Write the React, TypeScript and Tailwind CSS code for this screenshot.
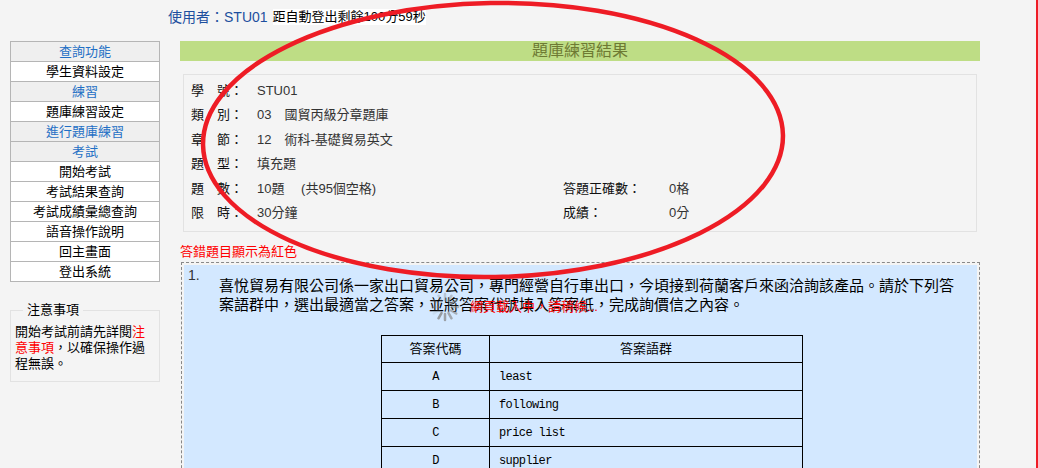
const FONT = "font-['Liberation_Sans','Noto_Sans_CJK_TC',sans-serif]";

const menu = [
  { label: "查詢功能", head: true },
  { label: "學生資料設定" },
  { label: "練習", head: true },
  { label: "題庫練習設定" },
  { label: "進行題庫練習", head: true },
  { label: "考試", head: true },
  { label: "開始考試" },
  { label: "考試結果查詢" },
  { label: "考試成績彙總查詢" },
  { label: "語音操作說明" },
  { label: "回主畫面" },
  { label: "登出系統" },
];

const infoRows = [
  { label: "學　號：", value: "STU01" },
  { label: "類　別：", value: "03　國貿丙級分章題庫" },
  { label: "章　節：", value: "12　術科-基礎貿易英文" },
  { label: "題　型：", value: "填充題" },
  { label: "題　數：", value: "10題　 (共95個空格)", extra: { label: "答題正確數：", value: "0格" } },
  { label: "限　時：", value: "30分鐘", extra: { label: "成績：", value: "0分" } },
];

const answers = [
  { code: "A", word: "least" },
  { code: "B", word: "following" },
  { code: "C", word: "price list" },
  { code: "D", word: "supplier" },
];

function Spinner() {
  // 12 spokes, darkest at the leading edge
  const spokes = Array.from({ length: 12 }, (_, i) => i);
  return (
    <svg width="32" height="32" viewBox="-16 -16 32 32">
      {spokes.map((i) => (
        <line
          key={i}
          x1="0"
          y1="-7"
          x2="0"
          y2="-13"
          stroke="#8a8a8a"
          strokeWidth="2.5"
          strokeLinecap="round"
          opacity={0.12 + ((i + 4) % 12) / 16}
          transform={`rotate(${i * 30})`}
        />
      ))}
    </svg>
  );
}

export default function App() {
  return (
    <div className={`relative h-[468px] w-full overflow-hidden bg-[#f4f4f4] text-[13px] text-[#222] ${FONT}`}>
      <header className="flex h-[41px] items-start pl-[168px] pt-[9px] leading-[16px]">
        <span className="text-[14px] text-[#1d4f9e]">使用者：STU01</span>
        <span className="ml-[5px] bg-white text-black">距自動登出剩餘100分59秒</span>
      </header>

      <div className="flex">
        <aside className="ml-[10px] w-[150px] shrink-0">
          <nav className="border-x border-t border-[#b5b5b5]">
            {menu.map((item) => (
              <div
                key={item.label}
                className={`flex h-[20px] items-center justify-center border-b border-[#b5b5b5] ${
                  item.head ? "bg-[#efefef] text-[#1f6fc5]" : "bg-white text-black"
                }`}
              >
                {item.label}
              </div>
            ))}
          </nav>

          <fieldset className="mt-[20px] h-[80px] border border-[#e2e2e2] px-[4px] pb-[4px]">
            <legend className="ml-[8px] px-[4px] leading-[16px] text-black">注意事項</legend>
            <p className="mt-[6px] leading-[16px] text-black">
              開始考試前請先詳閱<span className="text-[#ff0000]">注意事項</span>，以確保操作過程無誤。
            </p>
          </fieldset>
        </aside>

        <main className="ml-[20px] w-[800px]">
          <div className="flex h-[20px] items-center justify-center bg-[#bedd85] text-[16px] text-[#6e7a33]">
            題庫練習結果
          </div>

          <section className="mx-[3px] mt-[13px] border border-[#e2e2e2] px-[7px] pb-[6px] pt-[3px]">
            {infoRows.map((row) => (
              <div key={row.label} className="flex h-[24.5px] items-center">
                <span className="w-[66px] shrink-0 text-[#111]">{row.label}</span>
                <span className="w-[306px] shrink-0 whitespace-pre text-[#333]">{row.value}</span>
                {row.extra && (
                  <>
                    <span className="w-[106px] shrink-0 text-[#111]">{row.extra.label}</span>
                    <span className="text-[#333]">{row.extra.value}</span>
                  </>
                )}
              </div>
            ))}
          </section>

          <p className="mt-[11px] leading-[18px] text-[#ff0000]">答錯題目顯示為紅色</p>

          <div className="ml-[1px] mt-[1px] w-[799px] border border-dashed border-[#888] p-[2px]">
            <div className="flex h-[220px] bg-[#d3e8ff]">
              <div className="w-[35px] shrink-0 pl-[4px] pt-[2px] text-[14px] leading-[16px] text-[#333]">1.</div>
              <div className="w-[746px] pt-[11px]">
                <p className="text-[15px] leading-[19px] text-black">
                  喜悅貿易有限公司係一家出口貿易公司，專門經營自行車出口，今頃接到荷蘭客戶來函洽詢該產品。請於下列答案語群中，選出最適當之答案，並將答案代號填入答案紙，完成詢價信之內容。
                </p>
                <table className="mx-auto mt-[21px] w-[422px] border-collapse text-black">
                  <thead>
                    <tr>
                      <th className="h-[27px] w-[108px] border border-black font-normal">答案代碼</th>
                      <th className="h-[27px] border border-black font-normal">答案語群</th>
                    </tr>
                  </thead>
                  <tbody className="font-['Liberation_Mono',monospace] text-[12px] tracking-[-0.6px]">
                    {answers.map((a) => (
                      <tr key={a.code}>
                        <td className="h-[28px] border border-black text-center">{a.code}</td>
                        <td className="h-[28px] border border-black pl-[9px]">{a.word}</td>
                      </tr>
                    ))}
                  </tbody>
                </table>
              </div>
            </div>
          </div>
        </main>
      </div>

      {/* page-loading indicator */}
      <div className="absolute left-[429px] top-[291px] flex items-center">
        <Spinner />
        <span className="ml-[9px] text-[13px] text-[#ff0000]">網頁載入中，請稍候...</span>
      </div>

      {/* hand-drawn red markup */}
      <svg className="pointer-events-none absolute left-0 top-0" width="1038" height="468">
        <ellipse cx="493" cy="140" rx="290" ry="137" fill="none" stroke="#ee1c25" strokeWidth="4.5" transform="rotate(-1 493 140)" />
        <line x1="1037" y1="0" x2="1037" y2="468" stroke="#ee1c25" strokeWidth="2" />
      </svg>
    </div>
  );
}
